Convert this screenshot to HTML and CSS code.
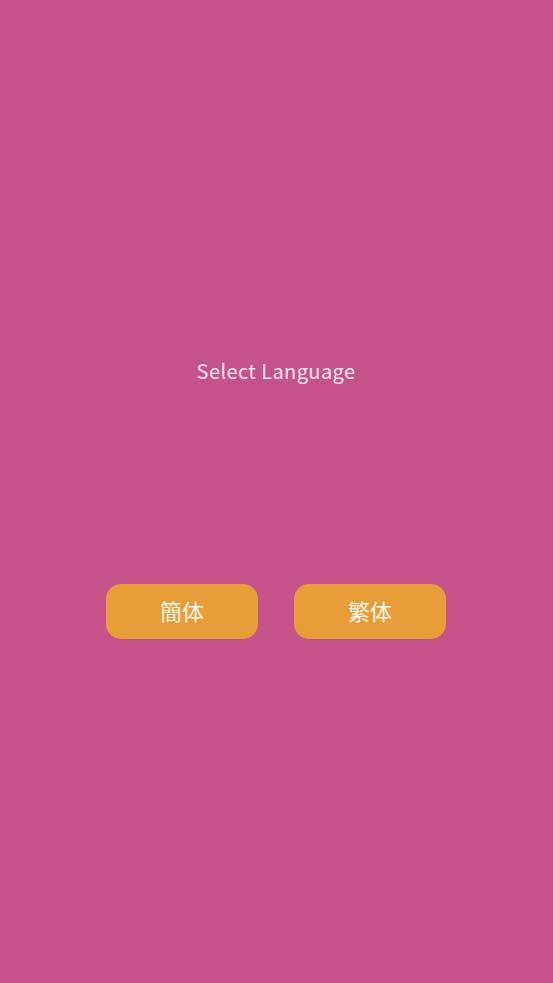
FILE: index.html
```html
<!DOCTYPE html>
<html lang="zh">
<head>
    <meta charset="UTF-8">
    <meta name="viewport" content="width=device-width, initial-scale=1.0">
    <title>Select Language</title>
    <link rel="stylesheet" href="styles.css">
</head>
<body>
    <div class="screen">
        <div class="title">Select Language</div>
        <div class="langs">
            <button class="lang">簡体</button>
            <button class="lang">繁体</button>
        </div>
    </div>
</body>
</html>
```

FILE: styles.css
```css
html, body {
    margin: 0;
    height: 100%;
}
body {
    background: #c4538a;
    font-family: "Noto Sans CJK JP", "Noto Sans", sans-serif;
}
.screen {
    display: flex;
    flex-direction: column;
    align-items: center;
    padding-top: 355px;
    padding-right: 1px;
}
.title {
    color: #fbe3ee;
    font-size: 20px;
    line-height: 32px;
    letter-spacing: 0.4px;
}
.langs {
    display: flex;
    gap: 36px;
    margin-top: 197px;
}
.lang {
    width: 152px;
    height: 55px;
    border: none;
    border-radius: 15px;
    background: #e69d3a;
    color: #fff8ec;
    font-family: inherit;
    font-size: 22px;
    padding: 0 0 4px;
}
```
